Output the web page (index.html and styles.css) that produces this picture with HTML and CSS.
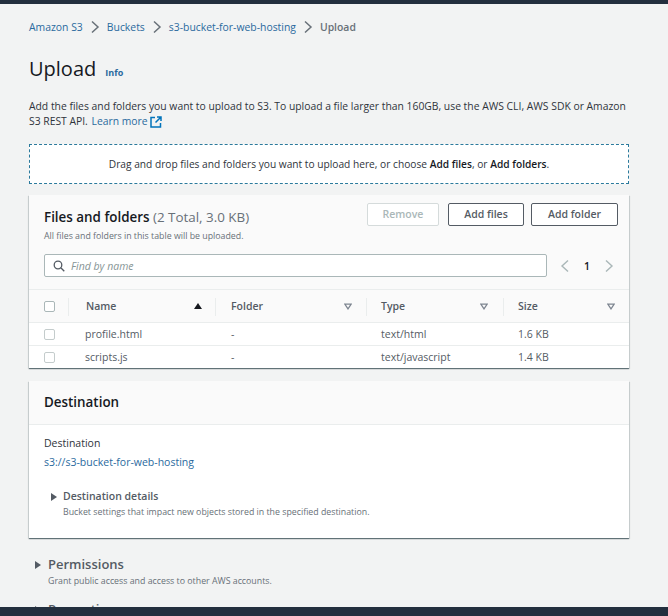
FILE: index.html
```html
<!DOCTYPE html>
<html lang="en">
<head>
    <meta charset="UTF-8">
    <meta name="viewport" content="width=device-width, initial-scale=1.0">
    <title>Upload</title>
    <link rel="stylesheet" href="styles.css">
</head>
<body>

<div class="top-bar"></div>

<div class="page">
    <!-- Breadcrumbs -->
    <nav class="breadcrumbs">
        <a href="#">Amazon S3</a>
        <svg class="crumb-sep" viewBox="0 0 10 14"><path d="M2 1.500 8 7l-6 5.500"/></svg>
        <a href="#">Buckets</a>
        <svg class="crumb-sep" viewBox="0 0 10 14"><path d="M2 1.500 8 7l-6 5.500"/></svg>
        <a href="#">s3-bucket-for-web-hosting</a>
        <svg class="crumb-sep" viewBox="0 0 10 14"><path d="M2 1.500 8 7l-6 5.500"/></svg>
        <span class="crumb-current">Upload</span>
    </nav>

    <div class="page-title">
        <h1>Upload</h1>
        <a class="info-link" href="#">Info</a>
    </div>

    <p class="intro">
        Add the files and folders you want to upload to S3. To upload a file larger than 160GB, use the AWS CLI, AWS SDK or Amazon S3 REST API.
        <a class="learn-more" href="#">Learn more<svg class="external" viewBox="0 0 12 12"><path d="M5 1.500H1v9.500h9.500V7M7 1h4v4M11 1 5.500 6.500"/></svg></a>
    </p>

    <div class="dropzone">
        <span>Drag and drop files and folders you want to upload here, or choose <b>Add files</b>, or <b>Add folders</b>.</span>
    </div>

    <!-- Files table -->
    <section class="card files-card">
        <div class="files-head">
            <div class="files-title-row">
                <div>
                    <h2>Files and folders <span class="count">(2 Total, 3.0 KB)</span></h2>
                    <p class="small-note">All files and folders in this table will be uploaded.</p>
                </div>
                <div class="actions">
                    <button class="btn btn-disabled">Remove</button>
                    <button class="btn btn-files">Add files</button>
                    <button class="btn btn-folder">Add folder</button>
                </div>
            </div>
            <div class="search-row">
                <div class="search">
                    <svg class="search-icon" viewBox="0 0 12 12"><circle cx="5" cy="5" r="3.800"/><path d="m8 8 3.300 3.300"/></svg>
                    <span>Find by name</span>
                </div>
                <div class="pager">
                    <svg viewBox="0 0 10 14"><path d="M8 1.500 2 7l6 5.500"/></svg>
                    <b>1</b>
                    <svg viewBox="0 0 10 14"><path d="M2 1.500 8 7l-6 5.500"/></svg>
                </div>
            </div>
        </div>

        <div class="table-row table-header">
            <div class="cell-check"><i class="checkbox"></i></div>
            <div class="cell-name"><span class="name-label">Name</span><i class="sort-up"></i></div>
            <div class="cell-folder"><span>Folder</span><svg class="filter" viewBox="0 0 10 8"><path d="M1 1h8L5 7z"/></svg></div>
            <div class="cell-type"><span>Type</span><svg class="filter" viewBox="0 0 10 8"><path d="M1 1h8L5 7z"/></svg></div>
            <div class="cell-size"><span>Size</span><svg class="filter" viewBox="0 0 10 8"><path d="M1 1h8L5 7z"/></svg></div>
        </div>
        <div class="table-row">
            <div class="cell-check"><i class="checkbox"></i></div>
            <div class="cell-name">profile.html</div>
            <div class="cell-folder">-</div>
            <div class="cell-type">text/html</div>
            <div class="cell-size">1.6 KB</div>
        </div>
        <div class="table-row">
            <div class="cell-check"><i class="checkbox"></i></div>
            <div class="cell-name">scripts.js</div>
            <div class="cell-folder">-</div>
            <div class="cell-type">text/javascript</div>
            <div class="cell-size">1.4 KB</div>
        </div>
    </section>

    <!-- Destination -->
    <section class="card destination-card">
        <div class="destination-head"><h2>Destination</h2></div>
        <div class="destination-body">
            <div class="label">Destination</div>
            <a href="#">s3://s3-bucket-for-web-hosting</a>
            <div class="expander">
                <i class="caret"></i>
                <div>
                    <h3>Destination details</h3>
                    <p class="small-note">Bucket settings that impact new objects stored in the specified destination.</p>
                </div>
            </div>
        </div>
    </section>

    <div class="section-expander">
        <i class="caret"></i>
        <div>
            <h3>Permissions</h3>
            <p class="small-note">Grant public access and access to other AWS accounts.</p>
        </div>
    </div>

    <div class="section-expander section-properties">
        <i class="caret"></i>
        <div>
            <h3>Properties</h3>
        </div>
    </div>
</div>

<div class="bottom-bar"></div>

</body>
</html>
```

FILE: styles.css
```css
* {
    margin: 0;
    padding: 0;
    box-sizing: border-box;
}

html, body {
    height: 616px;
    overflow: hidden;
}

body {
    font-family: 'Open Sans', 'Liberation Sans', sans-serif;
    font-size: 11px;
    background-color: #f2f3f3;
    color: #16191f;
    position: relative;
}

a {
    color: #0073bb;
    text-decoration: none;
}

.top-bar {
    height: 4px;
    background-color: #232f3e;
}

.bottom-bar {
    position: absolute;
    left: 0;
    right: 0;
    bottom: 0;
    height: 9px;
    background-color: #232f3e;
}

.page {
    padding: 15px 39px 0 29px;
}

/* Breadcrumbs */
.breadcrumbs {
    display: flex;
    align-items: center;
    height: 15px;
    font-size: 10.400px;
    color: #545b64;
}

.breadcrumbs a {
    color: #2a6a9e;
}

.crumb-sep {
    width: 10px;
    height: 14px;
    margin: 0 7px;
    fill: none;
    stroke: #687078;
    stroke-width: 1.500;
}

.crumb-current {
    font-weight: 600;
    color: #687078;
}

.page-title {
    display: flex;
    align-items: baseline;
    margin-top: 20px;
    height: 30px;
}

h1 {
    font-size: 20px;
    font-weight: 400;
    line-height: 30px;
}

.info-link {
    font-size: 9px;
    font-weight: 700;
    margin-left: 9px;
    color: #2a6a9e;
}

.intro {
    margin-top: 15px;
    font-size: 10.350px;
    line-height: 15px;
    color: #2f343b;
}

.intro a {
    color: #2a6a9e;
}

.learn-more {
    margin-left: 1px;
}

.external {
    width: 12px;
    height: 12px;
    vertical-align: -3px;
    margin-left: 2px;
    fill: none;
    stroke: #0073bb;
    stroke-width: 1.500;
}

.dropzone {
    margin-top: 15px;
    height: 40px;
    background-color: #fff;
    border: 1px dashed #2b7a9c;
    display: flex;
    justify-content: center;
    align-items: center;
    font-size: 10.200px;
    color: #2f343b;
}

.dropzone b {
    font-weight: 600;
    color: #16191f;
}

/* Cards */
.card {
    background-color: #fff;
    box-shadow: 0 1px 1px 0 rgba(0, 28, 36, 0.5), 1px 1px 1px 0 rgba(0, 28, 36, 0.1), -1px 1px 1px 0 rgba(0, 28, 36, 0.1);
}

.files-card {
    margin-top: 11px;
    height: 173px;
}

.files-head {
    height: 95px;
    background-color: #fafafa;
    padding: 8px 11px 0 15px;
    border-bottom: 1px solid #eaeded;
}

.files-title-row {
    display: flex;
    justify-content: space-between;
}

h2 {
    font-size: 13.400px;
    font-weight: 600;
    line-height: 19px;
    margin-top: 5px;
}

.count {
    font-weight: 400;
    color: #687078;
}

.small-note {
    font-size: 8.800px;
    line-height: 13px;
    color: #687078;
}

.files-title-row .small-note {
    margin-top: 3px;
}

.actions {
    display: flex;
    gap: 7px;
}

.btn {
    height: 23px;
    padding-bottom: 2px;
    font-family: inherit;
    font-size: 10.500px;
    font-weight: 600;
    background-color: #fff;
    color: #545b64;
    border: 1px solid #545b64;
    border-radius: 2px;
}

.btn-disabled {
    width: 72px;
    margin-right: 2px;
    color: #aab7b8;
    border-color: #d5dbdb;
}

.btn-files {
    width: 76px;
}

.btn-folder {
    width: 87px;
}

.search-row {
    display: flex;
    align-items: center;
    margin-top: 11px;
}

.search {
    width: 503px;
    height: 23px;
    background-color: #fff;
    border: 1px solid #aab7b8;
    border-radius: 2px;
    display: flex;
    align-items: center;
    padding-left: 8px;
    font-style: italic;
    font-size: 10.500px;
    color: #879596;
}

.search-icon {
    width: 12px;
    height: 12px;
    margin-right: 6px;
    fill: none;
    stroke: #545b64;
    stroke-width: 1.300;
}

.pager {
    display: flex;
    align-items: center;
    margin-left: 13px;
    gap: 14px;
    font-size: 10.500px;
    color: #16191f;
}

.pager svg {
    width: 10px;
    height: 14px;
    fill: none;
    stroke: #aab7b8;
    stroke-width: 1.400;
}

.pager b {
    font-weight: 600;
}

/* Table */
.table-row {
    display: flex;
    height: 23px;
    align-items: center;
    border-top: 1px solid #eaeded;
    font-size: 10.500px;
    color: #545b64;
}

.table-row > div {
    height: 100%;
    display: flex;
    align-items: center;
    flex-shrink: 0;
}

.table-header {
    height: 32px;
    border-top: none;
    background-color: #fafafa;
    font-weight: 600;
}

.name-label {
    margin-left: 1px;
}

.cell-check {
    width: 56px;
    padding-left: 15px;
}

.cell-name {
    width: 131px;
    justify-content: space-between;
    padding-right: 14px;
}

.cell-folder {
    width: 151px;
    padding-left: 15px;
    justify-content: space-between;
    padding-right: 15px;
}

.cell-type {
    width: 137px;
    padding-left: 14px;
    justify-content: space-between;
    padding-right: 16px;
}

.cell-size {
    width: 125px;
    padding-left: 14px;
    justify-content: space-between;
    padding-right: 14px;
}

.table-header .cell-check,
.table-header .cell-name,
.table-header .cell-folder,
.table-header .cell-type {
    position: relative;
}

.table-header .cell-check::after,
.table-header .cell-name::after,
.table-header .cell-folder::after,
.table-header .cell-type::after {
    content: "";
    position: absolute;
    right: 0;
    top: 8px;
    bottom: 6px;
    width: 1px;
    background-color: #eaeded;
}

.table-header .cell-check::after {
    right: 16px;
}

.checkbox {
    display: block;
    width: 11px;
    height: 11px;
    background-color: #fff;
    border: 1px solid #aab7b8;
    border-radius: 2px;
}

.table-row:not(.table-header) .checkbox {
    border-color: #c4cccc;
}

.sort-up {
    width: 0;
    height: 0;
    border-left: 4px solid transparent;
    border-right: 4px solid transparent;
    border-bottom: 6px solid #16191f;
}

.filter {
    width: 8px;
    height: 7px;
    fill: none;
    stroke: #7d8590;
    stroke-width: 1.600;
}

/* Destination */
.destination-card {
    margin-top: 13px;
    height: 157px;
}

.destination-head {
    height: 44px;
    background-color: #fafafa;
    border-bottom: 1px solid #eaeded;
    padding: 7px 15px 0;
}

.destination-body {
    padding: 11px 15px 0;
}

.label {
    font-size: 10.500px;
    line-height: 15px;
    color: #2f343b;
}

.destination-body a {
    display: block;
    margin-top: 4px;
    font-size: 10.500px;
    line-height: 15px;
    color: #2a6a9e;
}

.expander,
.section-expander {
    display: flex;
}

.expander {
    margin-top: 19px;
    padding-left: 7px;
}

.caret {
    width: 0;
    height: 0;
    margin-top: 4px;
    margin-right: 6px;
    border-top: 4px solid transparent;
    border-bottom: 4px solid transparent;
    border-left: 6px solid #545b64;
}

h3 {
    font-size: 10.500px;
    font-weight: 600;
    line-height: 15px;
    color: #545b64;
}

.expander .small-note {
    margin-top: 2px;
}

.section-expander {
    margin-top: 18px;
    padding-left: 6px;
}

.section-expander .caret {
    margin-top: 5px;
    margin-right: 7px;
}

.section-expander h3 {
    font-size: 13px;
    line-height: 17px;
}

.section-expander .small-note {
    margin-top: 2px;
}

.section-properties {
    margin-top: 13px;
}
```
